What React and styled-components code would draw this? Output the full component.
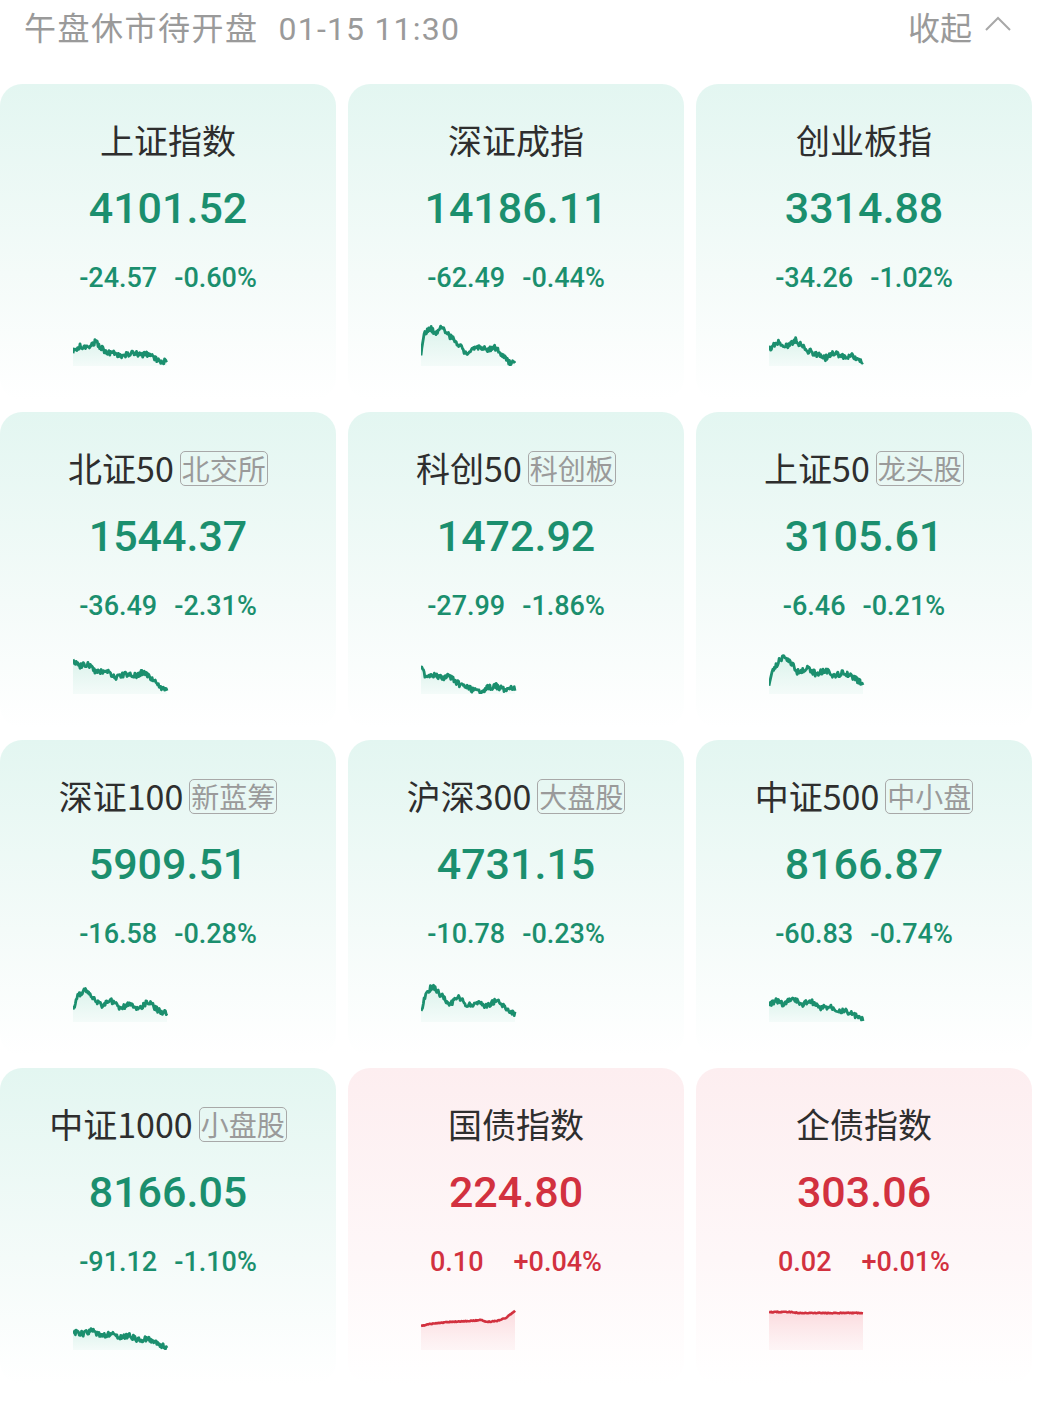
import React from "react";
import styled, { createGlobalStyle } from "styled-components";

const GREEN = "#1b8f6e";
const RED = "#d2313f";

//data
const indices = [
	{ name: "上证指数", value: "4101.52", chg: "-24.57", pct: "-0.60%", pts: [[0, 32], [0.08, 26], [0.12, 28], [0.24, 22], [0.35, 32], [0.45, 33], [0.5, 37], [0.62, 33], [0.72, 35], [0.8, 34], [0.9, 40], [1, 42]] },
	{ name: "深证成指", value: "14186.11", chg: "-62.49", pct: "-0.44%", pts: [[0, 33], [0.03, 15], [0.1, 8], [0.15, 14], [0.22, 6], [0.3, 16], [0.4, 24], [0.5, 36], [0.58, 26], [0.7, 30], [0.78, 27], [0.86, 35], [0.95, 44], [1, 41]] },
	{ name: "创业板指", value: "3314.88", chg: "-34.26", pct: "-1.02%", pts: [[0, 30], [0.1, 22], [0.2, 26], [0.28, 20], [0.4, 30], [0.5, 34], [0.6, 38], [0.7, 33], [0.8, 37], [0.9, 36], [1, 42]] },
	{ name: "北证50", tag: "北交所", value: "1544.37", chg: "-36.49", pct: "-2.31%", pts: [[0, 12], [0.08, 18], [0.15, 16], [0.25, 25], [0.35, 22], [0.45, 30], [0.55, 26], [0.65, 28], [0.75, 24], [0.85, 32], [1, 44]] },
	{ name: "科创50", tag: "科创板", value: "1472.92", chg: "-27.99", pct: "-1.86%", pts: [[0, 20], [0.05, 28], [0.12, 26], [0.2, 30], [0.3, 28], [0.4, 36], [0.5, 40], [0.6, 44], [0.7, 40], [0.8, 38], [0.9, 42], [1, 40]] },
	{ name: "上证50", tag: "龙头股", value: "3105.61", chg: "-6.46", pct: "-0.21%", pts: [[0, 36], [0.05, 20], [0.15, 8], [0.22, 12], [0.3, 24], [0.4, 20], [0.5, 26], [0.6, 22], [0.7, 28], [0.8, 24], [0.9, 30], [1, 36]] },
	{ name: "深证100", tag: "新蓝筹", value: "5909.51", chg: "-16.58", pct: "-0.28%", pts: [[0, 36], [0.05, 20], [0.12, 14], [0.2, 20], [0.3, 30], [0.4, 24], [0.5, 32], [0.6, 28], [0.7, 32], [0.8, 26], [0.9, 34], [1, 38]] },
	{ name: "沪深300", tag: "大盘股", value: "4731.15", chg: "-10.78", pct: "-0.23%", pts: [[0, 36], [0.05, 18], [0.12, 10], [0.2, 18], [0.3, 28], [0.4, 22], [0.5, 30], [0.6, 26], [0.7, 30], [0.8, 24], [0.9, 32], [1, 38]] },
	{ name: "中证500", tag: "中小盘", value: "8166.87", chg: "-60.83", pct: "-0.74%", pts: [[0, 30], [0.08, 24], [0.15, 28], [0.25, 22], [0.35, 28], [0.45, 26], [0.55, 32], [0.65, 30], [0.75, 34], [0.85, 36], [1, 44]] },
	{ name: "中证1000", tag: "小盘股", value: "8166.05", chg: "-91.12", pct: "-1.10%", pts: [[0, 28], [0.1, 30], [0.2, 26], [0.3, 32], [0.4, 30], [0.5, 34], [0.6, 32], [0.7, 36], [0.8, 35], [0.9, 40], [1, 44]] },
	{ name: "国债指数", value: "224.80", chg: "0.10", pct: "+0.04%", up: true, calm: true, pts: [[0, 22], [0.1, 20], [0.3, 18], [0.5, 17], [0.65, 16], [0.7, 18], [0.8, 17], [0.9, 14], [1, 7]] },
	{ name: "企债指数", value: "303.06", chg: "0.02", pct: "+0.01%", up: true, calm: true, pts: [[0, 8], [0.25, 8], [0.3, 9], [0.8, 9], [1, 9]] },
];

//little seeded noise so lines look like tick data
function rand(seed) {
	let s = seed;
	return () => {
		s = (s * 9301 + 49297) % 233280;
		return s / 233280;
	};
}

function buildLine(pts, seed, calm) {
	const r = rand(seed * 131 + 7);
	const W = 94;
	const n = 120;
	const out = [];
	for (let i = 0; i <= n; i++) {
		const t = i / n;
		let k = 0;
		while (k < pts.length - 2 && pts[k + 1][0] < t) k++;
		const [x0, y0] = pts[k];
		const [x1, y1] = pts[k + 1];
		const f = x1 === x0 ? 0 : (t - x0) / (x1 - x0);
		const y = y0 + (y1 - y0) * f + (calm ? (r() - 0.5) * 0.8 : (r() - 0.5) * 5.5);
		out.push([t * W, Math.max(2, Math.min(45, y))]);
	}
	return out;
}

function Spark({ pts, seed, up, calm }) {
	const line = buildLine(pts, seed, calm);
	const d = line.map(([x, y], i) => `${i ? "L" : "M"}${x.toFixed(1)} ${y.toFixed(1)}`).join(" ");
	const color = up ? RED : GREEN;
	const id = `g${seed}`;
	return (
		<Chart viewBox="0 0 190 46" width="190" height="46">
			<defs>
				<linearGradient id={id} x1="0" y1="0" x2="0" y2="1">
					<stop offset="0" stopColor={up ? "#fbd7db" : "#cdeee4"} stopOpacity={up ? 0.9 : 0.7} />
					<stop offset="1" stopColor={up ? "#fdf0f1" : "#eef9f6"} stopOpacity="0.6" />
				</linearGradient>
			</defs>
			<path d={`${d} L94 46 L0 46 Z`} fill={`url(#${id})`} />
			<path d={d} fill="none" stroke={color} strokeWidth={calm ? 2.6 : 2.8} strokeLinejoin="round" />
		</Chart>
	);
}

function App() {
	return (
		<>
			<GlobalStyle />
			<Page>
				<Header>
					<span>
						午盘休市待开盘<Time>01-15 11:30</Time>
					</span>
					<Collapse>
						收起
						<svg width="28" height="18" viewBox="0 0 28 18">
							<polyline points="2,15 14,3 26,15" fill="none" stroke="#a8a8a8" strokeWidth="2" />
						</svg>
					</Collapse>
				</Header>
				<Grid>
					{indices.map((item, i) => (
						<Card key={item.name} $up={item.up}>
							<TitleRow>
								<Title>{item.name}</Title>
								{item.tag && <Tag>{item.tag}</Tag>}
							</TitleRow>
							<Value $up={item.up}>{item.value}</Value>
							<Change $up={item.up} $wide={item.up}>
								<span>{item.chg}</span>
								<span>{item.pct}</span>
							</Change>
							<Spark pts={item.pts} seed={i + 1} up={item.up} calm={item.calm} />
						</Card>
					))}
				</Grid>
			</Page>
		</>
	);
}

const GlobalStyle = createGlobalStyle`
	body {
		margin: 0;
		background: #ffffff;
		font-family: Roboto, "Noto Sans CJK SC", sans-serif;
	}
`;

const Page = styled.div`
	width: 1056px;
	min-height: 1404px;
	background: #ffffff;
`;

const Header = styled.div`
	height: 52px;
	padding: 0 44px 0 24px;
	display: flex;
	align-items: center;
	justify-content: space-between;
	font-size: 32px;
	letter-spacing: 1.5px;
	color: #9a9a9a;
`;

const Time = styled.span`
	margin-left: 20px;
	letter-spacing: 1.2px;
`;

const Collapse = styled.span`
	display: flex;
	align-items: center;
	gap: 12px;
	letter-spacing: 0;
	svg {
		margin-top: -4px;
	}
`;

const Grid = styled.div`
	margin-top: 32px;
	width: 1032px;
	display: grid;
	grid-template-columns: repeat(3, 336px);
	gap: 12px;
`;

const Card = styled.div`
	height: 316px;
	border-radius: 22px;
	background: linear-gradient(
		180deg,
		${(p) => (p.$up ? "#fdeef0" : "#e3f6f1")} 0%,
		${(p) => (p.$up ? "#fef7f8" : "#f4fbf9")} 60%,
		#ffffff 100%
	);
	display: flex;
	flex-direction: column;
	align-items: center;
	padding-top: 36px;
	box-sizing: border-box;
`;

const TitleRow = styled.div`
	height: 40px;
	display: flex;
	align-items: center;
	gap: 6px;
`;

const Title = styled.div`
	font-size: 34px;
	color: #2e2e2e;
	font-family: "Noto Sans CJK SC", Roboto, sans-serif;
	line-height: 40px;
`;

const Tag = styled.div`
	font-size: 28px;
	line-height: 33px;
	color: #9a9a9a;
	border: 1.5px solid #a8a8a8;
	border-radius: 5px;
	padding: 0 1px;
	font-family: "Noto Sans CJK SC", sans-serif;
`;

const Value = styled.div`
	margin-top: 22px;
	font-size: 43px;
	line-height: 52px;
	font-weight: 500;
	color: ${(p) => (p.$up ? RED : GREEN)};
`;

const Change = styled.div`
	margin-top: 26px;
	height: 36px;
	display: flex;
	align-items: center;
	gap: ${(p) => (p.$wide ? "30px" : "17px")};
	font-size: 27px;
	font-weight: 500;
	color: ${(p) => (p.$up ? RED : GREEN)};
`;

const Chart = styled.svg`
	display: block;
	margin-top: 24px;
`;

export default App;
